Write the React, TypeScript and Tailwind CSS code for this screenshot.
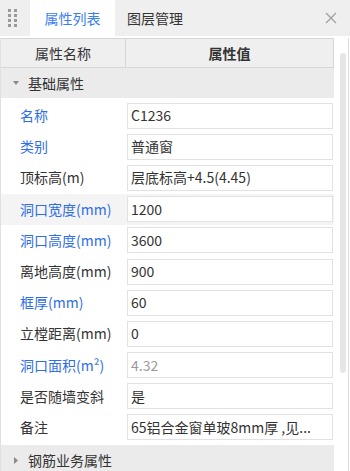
const rows: { label: string; value: string; blue?: boolean; muted?: boolean; selected?: boolean }[] = [
  { label: "名称", value: "C1236", blue: true },
  { label: "类别", value: "普通窗", blue: true },
  { label: "顶标高(m)", value: "层底标高+4.5(4.45)" },
  { label: "洞口宽度(mm)", value: "1200", blue: true, selected: true },
  { label: "洞口高度(mm)", value: "3600", blue: true },
  { label: "离地高度(mm)", value: "900" },
  { label: "框厚(mm)", value: "60", blue: true },
  { label: "立樘距离(mm)", value: "0" },
  { label: "洞口面积(m²)", value: "4.32", blue: true, muted: true },
  { label: "是否随墙变斜", value: "是" },
  { label: "备注", value: "65铝合金窗单玻8mm厚 ,见..." },
];

function Section({ title, open }: { title: string; open?: boolean }) {
  return (
    <div className="flex h-[30px] items-center bg-[#ebebeb] text-[14px] text-[#333]">
      <span className="flex w-[27px] justify-center pl-[2px]">
        {open ? (
          <svg width="6" height="4" viewBox="0 0 6 4">
            <path d="M0 0H6L3 4Z" fill="#8a8a8a" />
          </svg>
        ) : (
          <svg width="4" height="7" viewBox="0 0 4 7">
            <path d="M0 0L4 3.5L0 7Z" fill="#8a8a8a" />
          </svg>
        )}
      </span>
      <span>{title}</span>
    </div>
  );
}

export default function App() {
  return (
    <div
      className="relative h-[471px] w-[350px] overflow-hidden bg-white"
      style={{ fontFamily: '"Noto Sans CJK SC", "Microsoft YaHei", sans-serif' }}
    >
      {/* tab bar */}
      <div className="flex h-[36px] items-stretch bg-[#efefef] text-[14px]">
        <div className="grid w-[30px] grid-cols-2 content-center justify-items-center gap-y-[2px] pl-[7px] pr-[12px]">
          {Array.from({ length: 8 }).map((_, i) => (
            <span key={i} className="h-[3px] w-[3px] bg-[#9a9a9a]" />
          ))}
        </div>
        <div className="flex w-[85px] items-center justify-center bg-white text-[#3a7ef0]">属性列表</div>
        <div className="flex items-center pl-[12px] text-[#333]">图层管理</div>
        <div className="ml-auto flex items-center pr-[13px] text-[#a0a0a0]">
          <svg width="12" height="12" viewBox="0 0 12 12" stroke="currentColor" strokeWidth="1.3">
            <path d="M1 1L11 11M11 1L1 11" />
          </svg>
        </div>
      </div>

      <div className="flex pt-[2px]">
        <div className="w-[334px] border-l border-[#e0e0e0]">
          {/* header */}
          <div className="flex h-[30px] border border-l-0 border-[#d6d6d6] bg-[#efefef] text-[14px] text-[#333]">
            <div className="flex w-[125px] items-center justify-center border-r border-[#d6d6d6]">属性名称</div>
            <div className="flex flex-1 items-center justify-center font-bold">属性值</div>
          </div>

          <Section title="基础属性" open />
          <div className="h-[2px]" />
          {rows.map((r) => (
            <div
              key={r.label}
              className={`flex h-[31.2px] items-center text-[14px] ${r.selected ? "bg-[#f4f4f4]" : ""}`}
            >
              <div className={`w-[126px] pl-[19px] ${r.blue ? "text-[#2f6ee6]" : "text-[#333]"}`}>{r.label}</div>
              <div
                className={`flex h-[26px] flex-1 items-center truncate border border-[#e2e2e2] bg-white pl-[3px] ${
                  r.muted ? "text-[#9a9a9a]" : "text-[#333]"
                }`}
              >
                {r.value}
              </div>
              <div className="w-[1px]" />
            </div>
          ))}
          <div className="h-[2px]" />
          <Section title="钢筋业务属性" />
        </div>
        <div className="flex w-[14px] justify-center pl-[3px] pt-[15px]">
          <div className="h-[320px] w-[6px] rounded-full bg-[#e6e6e6]" />
        </div>
        <div className="h-[471px] w-[1px] bg-[#dcdcdc]" />
      </div>
    </div>
  );
}
